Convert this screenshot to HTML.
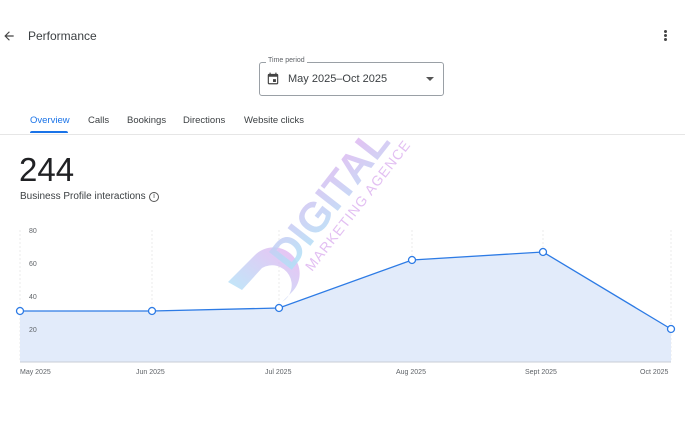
<!DOCTYPE html>
<html><head><style>
body{margin:0;width:685px;height:437px;background:#fff;font-family:"Liberation Sans",sans-serif;position:relative;overflow:hidden;color:#3c4043}
.a{position:absolute;white-space:nowrap}
</style></head><body>
<svg class="a" style="left:2px;top:29px" width="14" height="14" viewBox="0 0 24 24"><path d="M20 11H7.8l5.6-5.6L12 4l-8 8 8 8 1.4-1.4L7.8 13H20z" fill="#444"/></svg>
<div class="a" style="left:28px;top:29px;font-size:12px;color:#3c4043">Performance</div>
<div class="a" style="left:664px;top:30px;width:3px;height:3px;background:#444;border-radius:50%;box-shadow:0 4px #444,0 8px #444"></div>
<div class="a" style="left:259px;top:62px;width:183px;height:32px;border:1px solid #9aa0a6;border-radius:3px"></div>
<div class="a" style="left:266px;top:57px;font-size:7px;color:#5f6368;background:#fff;padding:0 2px">Time period</div>
<svg class="a" style="left:266px;top:71px" width="14" height="15" viewBox="0 0 24 24"><path d="M19 4h-1V2h-2v2H8V2H6v2H5a2 2 0 0 0-2 2v14a2 2 0 0 0 2 2h14a2 2 0 0 0 2-2V6a2 2 0 0 0-2-2zm0 16H5V9h14zM12 13h5v5h-5z" fill="#444"/></svg>
<div class="a" style="left:288px;top:73px;font-size:11px;color:#3c4043">May 2025–Oct 2025</div>
<div class="a" style="left:426px;top:77px;border-left:4px solid transparent;border-right:4px solid transparent;border-top:4px solid #555"></div>
<div class="a" style="left:30px;top:115px;font-size:9.5px;color:#1a73e8">Overview</div>
<div class="a" style="left:30px;top:131px;width:38px;height:2px;background:#1a73e8;border-radius:2px 2px 0 0"></div>
<div class="a" style="left:88px;top:115px;font-size:9.5px">Calls</div>
<div class="a" style="left:127px;top:115px;font-size:9.5px">Bookings</div>
<div class="a" style="left:183px;top:115px;font-size:9.5px">Directions</div>
<div class="a" style="left:244px;top:115px;font-size:9.5px">Website clicks</div>
<div class="a" style="left:0;top:134px;width:685px;height:1px;background:#e6e6e6"></div>
<div class="a" style="left:19px;top:151px;font-size:33px;color:#202124">244</div>
<div class="a" style="left:20px;top:191px;font-size:10px;color:#3c4043">Business Profile interactions</div>
<div class="a" style="left:149px;top:192px;width:8px;height:8px;border:1px solid #555;border-radius:50%;font-size:7px;line-height:8px;text-align:center">i</div>
<svg class="a" style="left:0;top:0" width="685" height="437">
<g stroke="#ebebeb" stroke-dasharray="2,2">
<line x1="20" y1="230" x2="20" y2="362"/><line x1="152" y1="230" x2="152" y2="362"/><line x1="279" y1="230" x2="279" y2="362"/><line x1="412" y1="230" x2="412" y2="362"/><line x1="543" y1="230" x2="543" y2="362"/><line x1="671" y1="230" x2="671" y2="362"/></g>
<polygon points="20,311 152,311 279,308 412,260 543,252 671,329 671,362 20,362" fill="#e2ebfa"/>
<line x1="20" y1="362" x2="671" y2="362" stroke="#c8cdd6"/>
<polyline points="20,311 152,311 279,308 412,260 543,252 671,329" fill="none" stroke="#2d7be5" stroke-width="1.3"/>
<g fill="#fff" stroke="#2d7be5" stroke-width="1.3"><circle cx="20" cy="311" r="3.5"/><circle cx="152" cy="311" r="3.5"/><circle cx="279" cy="308" r="3.5"/><circle cx="412" cy="260" r="3.5"/><circle cx="543" cy="252" r="3.5"/><circle cx="671" cy="329" r="3.5"/></g>
<g font-family="Liberation Sans" font-size="7" fill="#5f6368">
<text x="29" y="233">80</text><text x="29" y="266">60</text><text x="29" y="299">40</text><text x="29" y="332">20</text>
<text x="20" y="374">May 2025</text><text x="136" y="374">Jun 2025</text><text x="265" y="374">Jul 2025</text><text x="396" y="374">Aug 2025</text><text x="525" y="374">Sept 2025</text><text x="640" y="374">Oct 2025</text></g>
<defs><linearGradient id="g" x1="0" y1="1" x2="1" y2="0"><stop offset="0" stop-color="#a8e8f8"/><stop offset="1" stop-color="#e8b0f0"/></linearGradient></defs>
<path d="M228 282 L255 255 A24 24 0 0 1 292 292 L282 302 A15 15 0 0 0 262 268 L242 290 Z" fill="url(#g)" opacity="0.8"/>
<text x="0" y="0" transform="translate(290,272) rotate(-52)" font-family="Liberation Sans" font-weight="bold" font-size="42" fill="url(#g)" opacity="0.85">DIGITAL</text>
<text x="0" y="0" transform="translate(312,272) rotate(-52)" font-family="Liberation Sans" font-size="14" fill="#dcb0f0" opacity="0.8" letter-spacing="1">MARKETING AGENCE</text>
</svg>
</body></html>
